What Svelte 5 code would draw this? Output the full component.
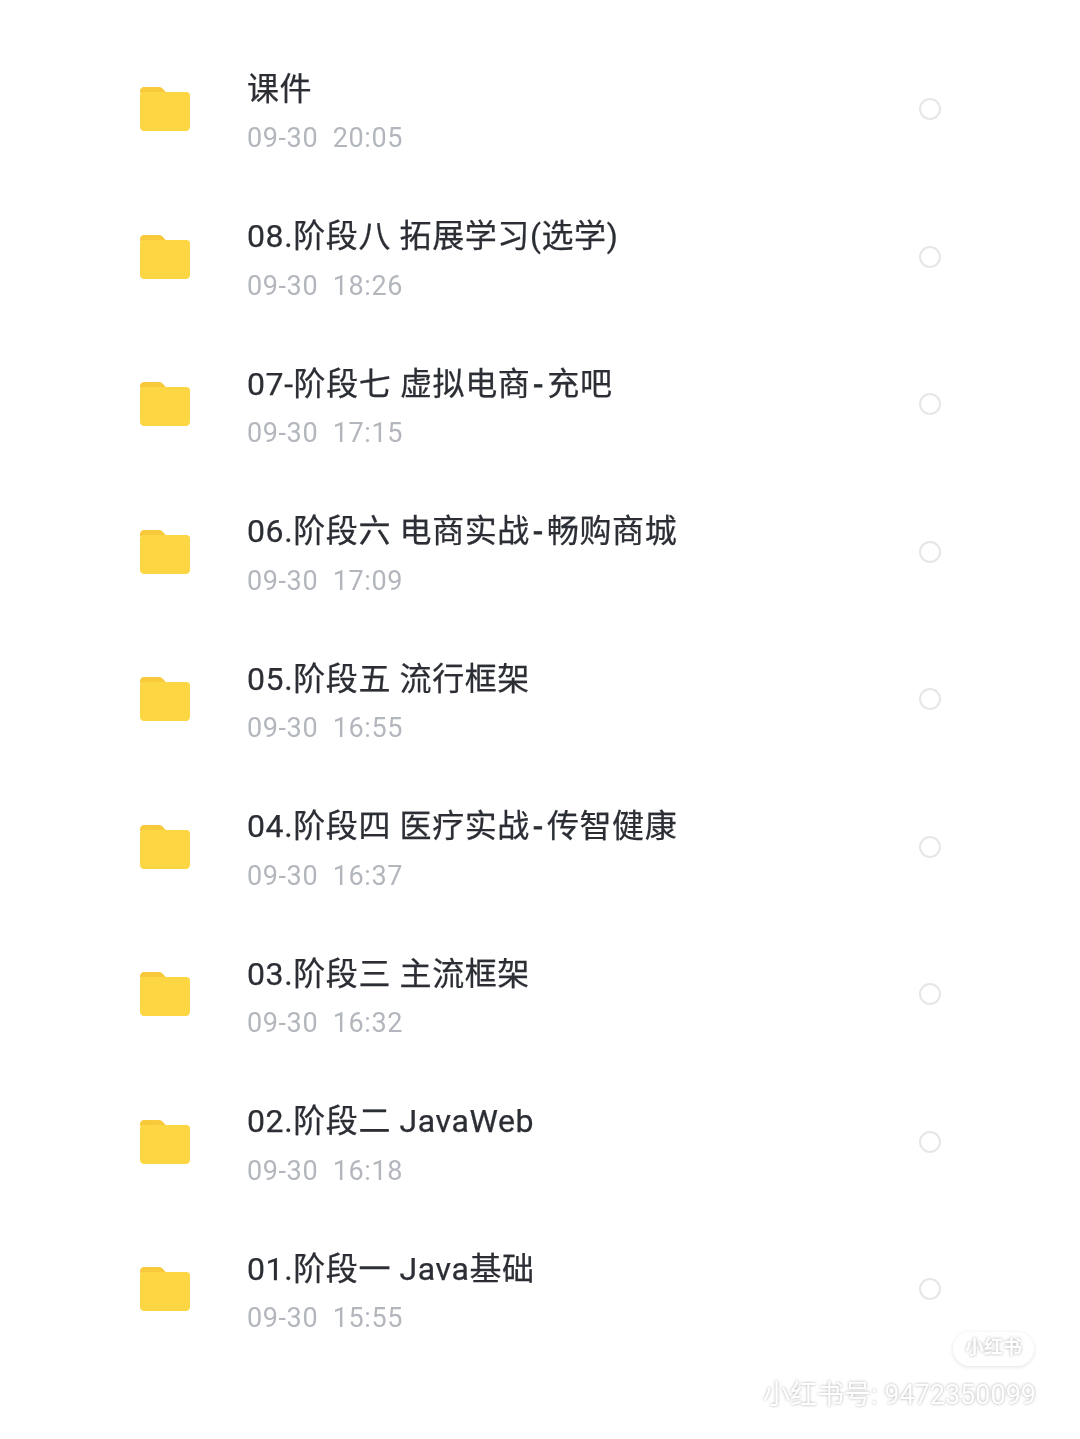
<script lang="ts">
	const folders = [
		{ name: '课件', time: '09-30  20:05' },
		{ name: '08.阶段八 拓展学习(选学)', time: '09-30  18:26' },
		{ name: '07-阶段七 虚拟电商-充吧', time: '09-30  17:15' },
		{ name: '06.阶段六 电商实战-畅购商城', time: '09-30  17:09' },
		{ name: '05.阶段五 流行框架', time: '09-30  16:55' },
		{ name: '04.阶段四 医疗实战-传智健康', time: '09-30  16:37' },
		{ name: '03.阶段三 主流框架', time: '09-30  16:32' },
		{ name: '02.阶段二 JavaWeb', time: '09-30  16:18' },
		{ name: '01.阶段一 Java基础', time: '09-30  15:55' }
	];

	// the dash between Chinese words sits wider than a latin one
	const parts = (name: string) => name.split(/(?<=[\u4e00-\u9fff])-/);
</script>

<div class="page">
	<ul class="list">
		{#each folders as folder}
			<li class="row">
				<svg class="folder" viewBox="0 0 50 44" aria-hidden="true">
					<path d="M4 0h15c1.800 0 3 .8 4 2l3.500 4H0V4c0-2.200 1.800-4 4-4z" fill="#f9c93c" />
					<path d="M3.500 5h43c2 0 3.500 1.500 3.500 3.500V40c0 2.200-1.800 4-4 4H4c-2.200 0-4-1.800-4-4V8.500C0 6.500 1.500 5 3.500 5z" fill="#fdd644" />
				</svg>
				<div class="info">
					<div class="name">
						{#each parts(folder.name) as part, i}{#if i}<span class="dash">-</span>{/if}{part}{/each}
					</div>
					<div class="time">{folder.time}</div>
				</div>
				<span class="radio"></span>
			</li>
		{/each}
	</ul>
	<div class="mark">
		<span class="badge">小红书</span>
		<span class="account">小红书号: 9472350099</span>
	</div>
</div>

<style>
	:global(body) {
		margin: 0;
		background: #fff;
	}
	.page {
		position: relative;
		height: 1439px;
		overflow: hidden;
		background: #fff;
		font-family: Roboto, 'Noto Sans CJK SC', sans-serif;
	}
	.list {
		list-style: none;
		margin: 0;
		padding: 35.500px 0 0;
		filter: blur(0.5px);
	}
	.row {
		display: flex;
		align-items: center;
		height: 147.500px;
		padding: 0 139px 0 140px;
	}
	.folder {
		flex: none;
		width: 50px;
		height: 44px;
	}
	.info {
		flex: 1;
		margin-left: 57px;
		min-width: 0;
		padding-top: 6px;
	}
	.name {
		height: 40px;
		font-size: 32px;
		line-height: 40px;
		letter-spacing: 0.6px;
		color: #2b2e34;
		-webkit-text-stroke: 0.25px #2b2e34;
		white-space: nowrap;
	}
	.dash {
		margin: 0 4px 0 3.500px;
		-webkit-text-stroke: 0.8px #2b2e34;
	}
	.time {
		margin-top: 11.500px;
		font-size: 27px;
		line-height: 36px;
		letter-spacing: 0.6px;
		color: #b3b7bd;
		white-space: pre;
	}
	.radio {
		flex: none;
		box-sizing: border-box;
		width: 22px;
		height: 22px;
		border: 2.500px solid #e6e6e6;
		border-radius: 50%;
	}
	.mark {
		position: absolute;
		right: 44px;
		top: 1332px;
		display: flex;
		flex-direction: column;
		align-items: flex-end;
		gap: 13px;
		color: #fff;
		text-shadow: 0 0 3px #a8a8a8;
		filter: blur(0.5px);
	}
	.badge {
		margin-right: 2px;
		padding: 0 12px;
		height: 34px;
		line-height: 32px;
		font-size: 19px;
		font-weight: 700;
		border-radius: 17px;
		box-shadow: 0 1px 4px #e2e2e2;
	}
	.account {
		font-size: 27px;
		line-height: 32px;
		white-space: nowrap;
	}
</style>
